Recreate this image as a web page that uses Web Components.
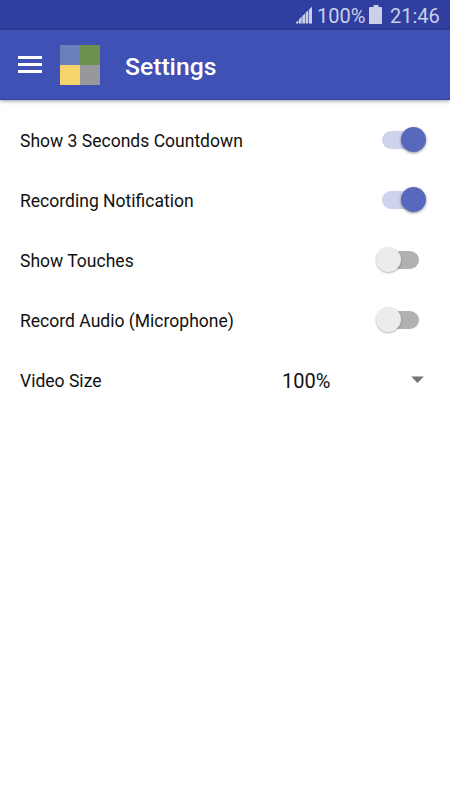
<!DOCTYPE html>
<html lang="en">
<head>
<meta charset="utf-8">
<title>Settings</title>
<style>
    :root {
        --primary: #3f51b5;
        --primary-dark: #303f9f;
        --status-text: #cbcfe8;
    }

    body {
        margin: 0;
        background: #fff;
        font-family: Roboto, "Liberation Sans", sans-serif;
    }
</style>
</head>
<body>
<settings-screen></settings-screen>

<script>
class StatusBar extends HTMLElement {
    constructor() {
        super();
        this.attachShadow({ mode: "open" });
    }

    static get styles() {
        return /* css */`
            :host {
                display: flex;
                justify-content: flex-end;
                align-items: center;
                box-sizing: border-box;
                height: 30px;
                padding-right: 10px;
                background: var(--primary-dark);
                color: var(--status-text);
                font-size: 20px;
                line-height: 30px;
            }

            svg {
                display: block;
                fill: currentColor;
            }

            .percent,
            .time {
                padding-top: 2px;
                white-space: nowrap;
            }

            .percent {
                width: 48px;
                margin-left: 4px;
            }

            .battery {
                margin-left: 4px;
            }

            .time {
                width: 50px;
                margin-left: 7px;
            }
        `;
    }

    connectedCallback() {
        this.render();
    }

    render() {
        this.shadowRoot.innerHTML = /* html */`
        <style>${StatusBar.styles}</style>
        <svg class="signal" width="17" height="30" viewBox="0 0 17 30">
            <path d="M-.5 23.5V22.8L2.4 20.2V23.5Z M3 23.5V19.2L5.7 16.6V23.5Z M6.3 23.5V16L9 13.4V23.5Z M9.6 23.5V12.8L12.3 10.2V23.5Z M13 23.5V9.4L16 6.8V23.5Z"/>
        </svg>
        <span class="percent">100%</span>
        <svg class="battery" width="14" height="30" viewBox="0 0 14 30">
            <path d="M4.5 5H9.5V7H12.2Q13 7 13 7.8V23.2Q13 24 12.2 24H.8Q0 24 0 23.2V7.8Q0 7 .8 7H4.5Z"/>
        </svg>
        <span class="time">21:46</span>`;
    }
}

class AppBar extends HTMLElement {
    constructor() {
        super();
        this.attachShadow({ mode: "open" });
    }

    static get styles() {
        return /* css */`
            :host {
                display: flex;
                align-items: center;
                box-sizing: border-box;
                height: 70px;
                padding-left: 18px;
                background: var(--primary);
                border-bottom: 1px solid #3042b0;
                box-shadow: 0 1px 4px rgba(0, 0, 0, .4);
                color: #fff;
            }

            .menu {
                display: grid;
                gap: 4px;
                width: 24px;
                margin-right: 18px;
            }

            .menu i {
                height: 3px;
                background: #fff;
            }

            .logo {
                display: grid;
                grid-template-columns: 20px 20px;
                grid-template-rows: 20px 20px;
                margin-right: 25px;
            }

            .blue { background: #6a7fbb; }
            .green { background: #6b914d; }
            .yellow { background: #f6d46c; }
            .grey { background: #98979c; }

            h1 {
                margin: 5px 0 0;
                font-size: 24.7px;
                font-weight: 500;
                line-height: 30px;
            }
        `;
    }

    connectedCallback() {
        this.render();
    }

    render() {
        this.shadowRoot.innerHTML = /* html */`
        <style>${AppBar.styles}</style>
        <div class="menu"><i></i><i></i><i></i></div>
        <div class="logo">
            <span class="blue"></span><span class="green"></span>
            <span class="yellow"></span><span class="grey"></span>
        </div>
        <h1><slot></slot></h1>`;
    }
}

class ToggleSwitch extends HTMLElement {
    constructor() {
        super();
        this.attachShadow({ mode: "open" });
    }

    static get styles() {
        return /* css */`
            :host {
                display: flex;
                align-items: center;
                width: 50px;
                height: 26px;
            }

            .track {
                display: flex;
                align-items: center;
                width: 37px;
                height: 18px;
                margin: 0 auto;
                border-radius: 9px;
                background: #b1b1b1;
            }

            .thumb {
                flex: none;
                width: 25px;
                height: 25px;
                margin: 0 0 1px -6px;
                border-radius: 50%;
                background: #ececec;
                box-shadow: 0 1px 2px rgba(0, 0, 0, .3);
            }

            :host([checked]) .track {
                background: #ced2ed;
            }

            :host([checked]) .thumb {
                margin-left: 19px;
                background: #5868bd;
                box-shadow: 0 1px 3px rgba(0, 0, 0, .45);
            }
        `;
    }

    connectedCallback() {
        this.render();
    }

    render() {
        this.shadowRoot.innerHTML = /* html */`
        <style>${ToggleSwitch.styles}</style>
        <div class="track"><div class="thumb"></div></div>`;
    }
}

class SpinnerSelect extends HTMLElement {
    constructor() {
        super();
        this.attachShadow({ mode: "open" });
    }

    static get styles() {
        return /* css */`
            :host {
                display: flex;
                justify-content: space-between;
                align-items: center;
                width: 142px;
                margin-right: 1px;
                font-size: 20px;
            }

            .value {
                padding-top: 2px;
            }

            svg {
                display: block;
                fill: #737373;
            }
        `;
    }

    connectedCallback() {
        this.render();
    }

    render() {
        this.shadowRoot.innerHTML = /* html */`
        <style>${SpinnerSelect.styles}</style>
        <span class="value"><slot></slot></span>
        <svg width="13" height="8" viewBox="0 0 13 8"><path d="M.3 .4H12.7L6.5 7Z"/></svg>`;
    }
}

class SettingRow extends HTMLElement {
    constructor() {
        super();
        this.attachShadow({ mode: "open" });
    }

    static get styles() {
        return /* css */`
            :host {
                display: flex;
                justify-content: space-between;
                align-items: center;
                box-sizing: border-box;
                height: 60px;
                padding: 0 25px 0 20px;
                color: #111;
                font-size: 17.55px;
            }

            .label {
                padding-top: 2px;
                white-space: nowrap;
            }
        `;
    }

    connectedCallback() {
        this.render();
    }

    render() {
        this.shadowRoot.innerHTML = /* html */`
        <style>${SettingRow.styles}</style>
        <span class="label">${this.getAttribute("label")}</span>
        <slot></slot>`;
    }
}

class SettingsScreen extends HTMLElement {
    constructor() {
        super();
        this.attachShadow({ mode: "open" });
    }

    static get styles() {
        return /* css */`
            :host {
                display: block;
                height: 800px;
                overflow: hidden;
            }

            main {
                padding-top: 10px;
            }
        `;
    }

    connectedCallback() {
        this.render();
    }

    render() {
        this.shadowRoot.innerHTML = /* html */`
        <style>${SettingsScreen.styles}</style>
        <status-bar></status-bar>
        <app-bar>Settings</app-bar>
        <main>
            <setting-row label="Show 3 Seconds Countdown"><toggle-switch checked></toggle-switch></setting-row>
            <setting-row label="Recording Notification"><toggle-switch checked></toggle-switch></setting-row>
            <setting-row label="Show Touches"><toggle-switch></toggle-switch></setting-row>
            <setting-row label="Record Audio (Microphone)"><toggle-switch></toggle-switch></setting-row>
            <setting-row label="Video Size"><spinner-select>100%</spinner-select></setting-row>
        </main>`;
    }
}

customElements.define("status-bar", StatusBar);
customElements.define("app-bar", AppBar);
customElements.define("toggle-switch", ToggleSwitch);
customElements.define("spinner-select", SpinnerSelect);
customElements.define("setting-row", SettingRow);
customElements.define("settings-screen", SettingsScreen);
</script>
</body>
</html>
